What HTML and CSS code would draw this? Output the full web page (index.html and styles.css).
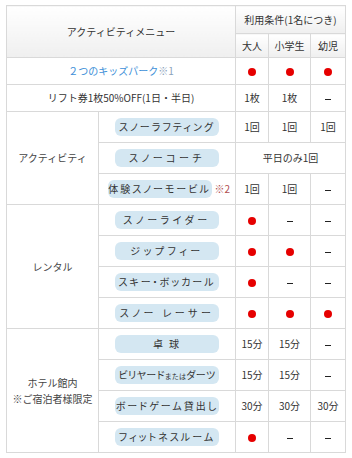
FILE: index.html
```html
<!DOCTYPE html>
<html lang="ja">
<head>
<meta charset="utf-8">
<title>アクティビティメニュー</title>
<link rel="stylesheet" href="styles.css">
</head>
<body>
<table class="menu">
  <colgroup>
    <col class="c-cat"><col class="c-item"><col class="c-a"><col class="c-b"><col class="c-c">
  </colgroup>
  <tr class="r-h1">
    <th colspan="2" rowspan="2" class="hd">アクティビティメニュー</th>
    <th colspan="3" class="hd">利用条件(1名につき)</th>
  </tr>
  <tr class="r-h2">
    <th class="hd">大人</th><th class="hd">小学生</th><th class="hd">幼児</th>
  </tr>
  <tr class="r-s">
    <td colspan="2" class="kids">２つのキッズパーク<span class="note1">※1</span></td>
    <td><span class="dot"></span></td><td><span class="dot"></span></td><td><span class="dot"></span></td>
  </tr>
  <tr class="r-s">
    <td colspan="2">リフト券1枚50%OFF(1日・半日)</td>
    <td>1枚</td><td>1枚</td><td><span class="dash"></span></td>
  </tr>
  <tr class="r">
    <td rowspan="3" class="cat">アクティビティ</td>
    <td class="item"><span class="pill">スノーラフティング</span></td>
    <td>1回</td><td>1回</td><td>1回</td>
  </tr>
  <tr class="r">
    <td class="item"><span class="pill wide">スノーコーチ</span></td>
    <td colspan="3">平日のみ1回</td>
  </tr>
  <tr class="r">
    <td class="item"><span class="pill">体験スノーモービル</span><span class="note2">※2</span></td>
    <td>1回</td><td>1回</td><td><span class="dash"></span></td>
  </tr>
  <tr class="r">
    <td rowspan="4" class="cat">レンタル</td>
    <td class="item"><span class="pill wide">スノーライダー</span></td>
    <td><span class="dot"></span></td><td><span class="dash"></span></td><td><span class="dash"></span></td>
  </tr>
  <tr class="r">
    <td class="item"><span class="pill wide">ジップフィー</span></td>
    <td><span class="dot"></span></td><td><span class="dot"></span></td><td><span class="dash"></span></td>
  </tr>
  <tr class="r">
    <td class="item"><span class="pill">スキー・ボッカール</span></td>
    <td><span class="dot"></span></td><td><span class="dash"></span></td><td><span class="dash"></span></td>
  </tr>
  <tr class="r">
    <td class="item"><span class="pill wide">スノー レーサー</span></td>
    <td><span class="dot"></span></td><td><span class="dot"></span></td><td><span class="dot"></span></td>
  </tr>
  <tr class="r">
    <td rowspan="4" class="cat"><span class="line">ホテル館内</span><span class="line">※ご宿泊者様限定</span></td>
    <td class="item"><span class="pill">卓 球</span></td>
    <td>15分</td><td>15分</td><td><span class="dash"></span></td>
  </tr>
  <tr class="r">
    <td class="item"><span class="pill tight">ビリヤード<small>または</small>ダーツ</span></td>
    <td>15分</td><td>15分</td><td><span class="dash"></span></td>
  </tr>
  <tr class="r">
    <td class="item"><span class="pill">ボードゲーム貸出し</span></td>
    <td>30分</td><td>30分</td><td>30分</td>
  </tr>
  <tr class="r">
    <td class="item"><span class="pill">フィットネスルーム</span></td>
    <td><span class="dot"></span></td><td><span class="dash"></span></td><td><span class="dash"></span></td>
  </tr>
</table>
</body>
</html>
```

FILE: styles.css
```css
html, body {
  margin: 0;
  padding: 0;
  background: #fff;
}
body {
  font-family: "Noto Sans CJK JP", "Noto Sans", sans-serif;
  font-size: 10px;
  color: #333;
}
.menu {
  margin: 5px 0 0 6px;
  width: 339px;
  table-layout: fixed;
  border-collapse: collapse;
  border: 1px solid #d6d6d6;
}
.c-cat { width: 92px; }
.c-item { width: 137px; }
.c-a { width: 33px; }
.c-b { width: 42px; }
.c-c { width: 35px; }
.menu th, .menu td {
  border: 1px solid #d9d9d9;
  padding: 0;
  text-align: center;
  vertical-align: middle;
  font-weight: normal;
  line-height: 12px;
  white-space: nowrap;
}
.hd {
  background: linear-gradient(#ffffff, #efefef);
}
.r-h1 { height: 28px; }
.r-h2 { height: 24px; }
.r-s { height: 27px; }
.r { height: 31px; }
.kids {
  color: #3d8fd8;
}
.note1 {
  color: #8aa2bb;
}
.cat {
  color: #444;
}
.cat .line {
  display: block;
  line-height: 14px;
}
.cat .line + .line {
  margin-top: 2px;
}
.pill {
  display: inline-block;
  width: 104px;
  height: 18px;
  line-height: 18px;
  border-radius: 6px;
  background: #d4e7f2;
  color: #333;
  letter-spacing: 2px;
  font-feature-settings: "palt";
  vertical-align: middle;
}
.pill.wide { letter-spacing: 3.5px; }
.pill.tight { letter-spacing: 0.4px; }
.pill small {
  font-size: 7px;
}
.note2 {
  display: inline-block;
  margin-left: 3px;
  color: #b05050;
  vertical-align: middle;
  width: 12px;
  text-align: left;
}
.dot {
  display: inline-block;
  width: 8px;
  height: 8px;
  border-radius: 50%;
  background: #e60000;
  vertical-align: middle;
}
.dash {
  display: inline-block;
  width: 6px;
  height: 1.5px;
  background: #222;
  vertical-align: middle;
}
```
